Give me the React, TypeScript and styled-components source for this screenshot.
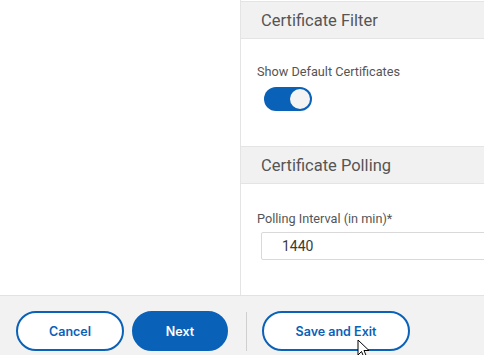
import * as React from 'react';
import styled, { createGlobalStyle } from 'styled-components';

const GlobalStyle = createGlobalStyle`
	html, body {
		margin: 0;
		padding: 0;
		background: #ffffff;
	}
	body {
		font-family: Roboto, "Liberation Sans", Arial, sans-serif;
	}
`;

const Screen = styled.div`
	position: relative;
	width: 484px;
	height: 355px;
	overflow: hidden;
	display: flex;
	flex-direction: column;
	background: #ffffff;
`;

const Main = styled.div`
	display: flex;
	height: 295px;
`;

const LeftPane = styled.div`
	flex: 0 0 240px;
	border-right: 1px solid #e4e4e4;
	background: #ffffff;
`;

const Panel = styled.div`
	flex: 0 0 300px;
	padding-top: 1px;
	display: flex;
	flex-direction: column;
`;

const SectionHeader = styled.div`
	height: 36px;
	display: flex;
	align-items: center;
	padding-left: 20px;
	background: #f1f1f1;
	border-top: 1px solid #e4e4e4;
	border-bottom: 1px solid #e4e4e4;
	font-size: 16.5px;
	font-weight: 400;
	color: #555555;
`;

const SectionBody = styled.div<{ $height: number; $top: number }>`
	height: ${(p) => p.$height}px;
	box-sizing: border-box;
	padding: ${(p) => p.$top}px 0 0 16px;
	display: flex;
	flex-direction: column;
	align-items: flex-start;
`;

const Label = styled.div`
	font-size: 12.7px;
	line-height: 15px;
	color: #555555;
`;

const Toggle = styled.div<{ $on: boolean }>`
	position: relative;
	width: 48px;
	height: 24px;
	margin: 8px 0 0 7px;
	border-radius: 12px;
	background: ${(p) => (p.$on ? '#0a61b8' : '#bdbdbd')};
`;

const Knob = styled.span<{ $on: boolean }>`
	position: absolute;
	top: 2px;
	left: ${(p) => (p.$on ? '26px' : '2px')};
	width: 20px;
	height: 20px;
	border-radius: 50%;
	background: #f4f4f4;
`;

const Input = styled.div`
	width: 280px;
	height: 28px;
	box-sizing: border-box;
	margin: 6px 0 0 4px;
	padding-left: 20px;
	display: flex;
	align-items: center;
	border: 1px solid #d9d9d9;
	border-radius: 2px;
	font-size: 14px;
	color: #3a3a3a;
`;

const Footer = styled.div`
	flex: 1;
	display: flex;
	align-items: flex-start;
	padding: 15px 0 0 16px;
	background: #f2f2f2;
	border-top: 1px solid #e2e2e2;
`;

const Button = styled.button<{ $primary?: boolean; $width: number }>`
	width: ${(p) => p.$width}px;
	height: 40px;
	box-sizing: border-box;
	border-radius: 20px;
	border: 2px solid #0a61b8;
	background: ${(p) => (p.$primary ? '#0a61b8' : '#ffffff')};
	color: ${(p) => (p.$primary ? '#ffffff' : '#0a61b8')};
	font-family: Inter, Roboto, "Liberation Sans", sans-serif;
	font-size: 12.5px;
	font-weight: 600;
	padding: 0;
	cursor: pointer;
`;

const Divider = styled.div`
	width: 1px;
	height: 39px;
	margin: 1px 15px 0 18px;
	background: #cfcfcf;
`;

const Pointer = styled.svg`
	position: absolute;
	left: 357px;
	top: 339px;
`;

export default function App() {
	return (
		<Screen>
			<GlobalStyle />
			<Main>
				<LeftPane />
				<Panel>
					<SectionHeader>Certificate Filter</SectionHeader>
					<SectionBody $height={107} $top={25}>
						<Label>Show Default Certificates</Label>
						<Toggle $on>
							<Knob $on />
						</Toggle>
					</SectionBody>
					<SectionHeader>Certificate Polling</SectionHeader>
					<SectionBody $height={109} $top={27}>
						<Label>Polling Interval (in min)*</Label>
						<Input>1440</Input>
					</SectionBody>
				</Panel>
			</Main>
			<Footer>
				<Button $width={108}>Cancel</Button>
				<Button $primary $width={96} style={{ marginLeft: 8 }}>Next</Button>
				<Divider />
				<Button $width={148}>Save and Exit</Button>
			</Footer>
			<Pointer width="14" height="20" viewBox="0 0 14 20">
				<path d="M1 1 L1 16 L4.5 12.5 L7 18.5 L9.5 17.5 L7 11.5 L12 11.5 Z" fill="#ffffff" stroke="#000000" strokeWidth="1" strokeLinejoin="round" />
			</Pointer>
		</Screen>
	);
}
